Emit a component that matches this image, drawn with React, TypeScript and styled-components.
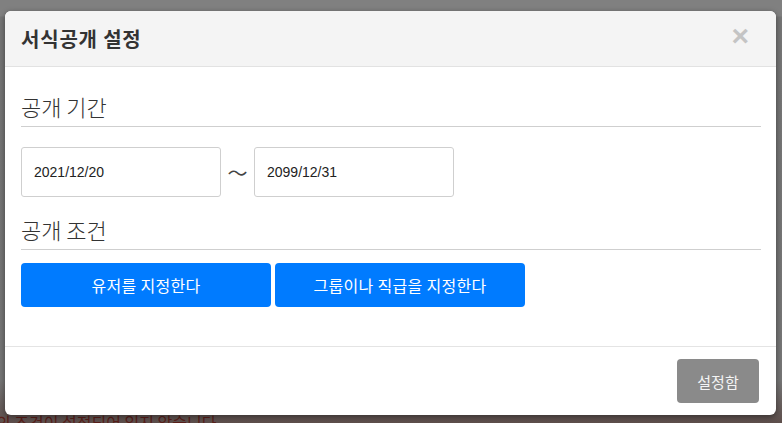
import styled, { createGlobalStyle } from 'styled-components';

const GlobalStyle = createGlobalStyle`
    html, body {
        margin: 0;
        padding: 0;
    }
    body {
        background: #7b7b7b;
        font-family: 'Noto Sans CJK KR', 'Liberation Sans', sans-serif;
        overflow: hidden;
    }
`;

const Page = styled.div`
    width: 782px;
    height: 423px;
    background: linear-gradient(#808080 0px, #808080 16px, #767676 17px, #777 380px, #5e4f4c 423px);
    padding: 11px 6px 0 5px;
    box-sizing: border-box;
    position: relative;
    overflow: hidden;
`;

const BehindText = styled.div`
    position: absolute;
    left: -4px;
    top: 410px;
    font-size: 16px;
    color: #5a1f1a;
    white-space: nowrap;
`;

const Modal = styled.div`
    position: relative;
    z-index: 1;
    width: 771px;
    height: 404px;
    background: #fff;
    border-radius: 6px;
    box-shadow: 0 2px 6px rgba(0, 0, 0, 0.45);
    display: flex;
    flex-direction: column;
    overflow: hidden;
`;

const Header = styled.div`
    height: 55px;
    background: #f4f4f4;
    border-bottom: 1px solid #e2e2e2;
    display: flex;
    align-items: center;
    justify-content: space-between;
    padding: 0 27px 0 16px;
    flex-shrink: 0;
`;

const Title = styled.h2`
    margin: 0;
    font-size: 20px;
    font-weight: 700;
    color: #333;
    letter-spacing: 0.8px;
`;

const Close = styled.span`
    font-family: 'Liberation Sans', sans-serif;
    font-size: 30px;
    font-weight: 700;
    color: #c4c4c4;
    line-height: 1;
    margin-top: -6px;
`;

const Body = styled.div`
    flex: 1;
    padding: 25px 15px 0 16px;
`;

const Heading = styled.div<{ $top: number }>`
    margin-top: ${(p) => p.$top}px;
    height: 34px;
    border-bottom: 1px solid #cfcfcf;
    font-size: 22px;
    font-weight: 300;
    color: #333;
    line-height: 28px;
`;

const DateRow = styled.div`
    display: flex;
    align-items: center;
    margin-top: 20px;
`;

const DateInput = styled.div`
    width: 186px;
    height: 48px;
    border: 1px solid #cfcfcf;
    border-radius: 3px;
    display: flex;
    align-items: center;
    padding-left: 12px;
    font-family: 'Liberation Sans', sans-serif;
    font-size: 14px;
    color: #222;
`;

const Tilde = styled.span`
    width: 33px;
    text-align: center;
    font-size: 20px;
    color: #444;
    font-family: 'Noto Sans CJK KR', sans-serif;
`;

const ButtonRow = styled.div`
    display: flex;
    gap: 4px;
    margin-top: 13px;
`;

const BlueButton = styled.button`
    width: 250px;
    height: 44px;
    border: none;
    border-radius: 4px;
    background: #007bff;
    color: #fff;
    font-family: 'Noto Sans CJK KR', sans-serif;
    font-size: 16px;
    letter-spacing: 0.3px;
    padding: 0;
`;

const Footer = styled.div`
    height: 69px;
    border-top: 1px solid #e4e4e4;
    display: flex;
    align-items: flex-start;
    justify-content: flex-end;
    padding: 12px 17px 0 0;
    box-sizing: border-box;
    flex-shrink: 0;
`;

const GrayButton = styled.button`
    width: 82px;
    height: 44px;
    border: none;
    border-radius: 4px;
    background: #8a8a8a;
    color: #f4f4f4;
    font-family: 'Noto Sans CJK KR', sans-serif;
    font-size: 15px;
    padding: 0;
`;

function App() {
    return (
        <>
            <GlobalStyle />
            <Page>
                <Modal>
                    <Header>
                        <Title>서식공개 설정</Title>
                        <Close>×</Close>
                    </Header>
                    <Body>
                        <Heading $top={0}>공개 기간</Heading>
                        <DateRow>
                            <DateInput>2021/12/20</DateInput>
                            <Tilde>〜</Tilde>
                            <DateInput>2099/12/31</DateInput>
                        </DateRow>
                        <Heading $top={18}>공개 조건</Heading>
                        <ButtonRow>
                            <BlueButton>유저를 지정한다</BlueButton>
                            <BlueButton>그룹이나 직급을 지정한다</BlueButton>
                        </ButtonRow>
                    </Body>
                    <Footer>
                        <GrayButton>설정함</GrayButton>
                    </Footer>
                </Modal>
                <BehindText>의 조건이 설정되어 있지 않습니다</BehindText>
            </Page>
        </>
    );
}

export default App;
